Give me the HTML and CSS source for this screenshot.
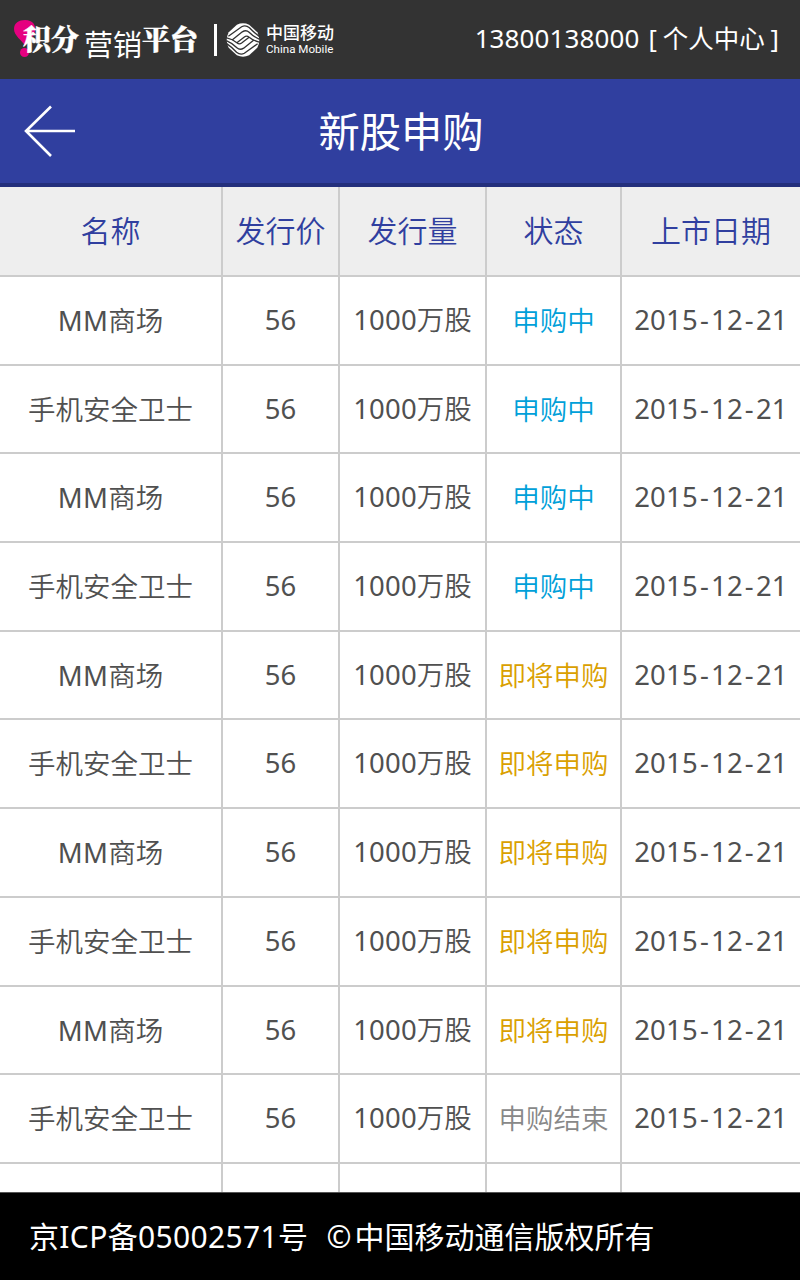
FILE: index.html
```html
<!DOCTYPE html>
<html lang="zh-CN">
<head>
<meta charset="utf-8">
<title>新股申购</title>
<link rel="stylesheet" href="styles.css">
</head>
<body>
<header class="topbar">
  <div class="brand">
    <svg class="mark" viewBox="0 0 24 40"><path d="M1 11C1 5 6 2 12 2C20 2 23 7 22 13C21 20 15 22 12 28C9 22 1 18 1 11Z"/><circle cx="11.5" cy="34.5" r="4.5"/></svg>
    <span class="serif first">积分</span><span class="sans">营销</span><span class="serif last">平台</span>
  </div>
  <i class="divider"></i>
  <svg class="cmcc" viewBox="0 0 100 100">
    <path class="disc" d="M32 5Q50 -3 68 5L92 27Q104 50 92 73L68 95Q50 103 32 95L8 73Q-4 50 8 27Z"/>
    <path d="M7 39L46 11Q58 5 69 14Q84 30 99 40M18 50L48 26Q59 19 68 27Q82 41 99 48M32 58L54 41Q61 36 68 42Q80 52 98 56"/>
    <path transform="rotate(180 50 50)" d="M7 39L46 11Q58 5 69 14Q84 30 99 40M18 50L48 26Q59 19 68 27Q82 41 99 48M32 58L54 41Q61 36 68 42Q80 52 98 56"/>
  </svg>
  <div class="cm"><span class="cm-zh">中国移动</span><span class="cm-en">China Mobile</span></div>
  <div class="user"><span class="phone">13800138000</span><span class="center">[ 个人中心 ]</span></div>
</header>
<div class="titlebar">
  <svg class="back" viewBox="0 0 52 52"><path d="M27 1.5L2 26L27 51M2 26H51"/></svg>
  <h1>新股申购</h1>
</div>
<main class="table">
  <div class="row head"><b>名称</b><b>发行价</b><b>发行量</b><b>状态</b><b>上市日期</b></div>
  <div class="row"><span><em>MM</em>商场</span><span class="num">56</span><span class="vol"><em>1000</em>万股</span><span class="open">申购中</span><span class="num date">2015<i>-</i>12<i>-</i>21</span></div>
  <div class="row"><span>手机安全卫士</span><span class="num">56</span><span class="vol"><em>1000</em>万股</span><span class="open">申购中</span><span class="num date">2015<i>-</i>12<i>-</i>21</span></div>
  <div class="row"><span><em>MM</em>商场</span><span class="num">56</span><span class="vol"><em>1000</em>万股</span><span class="open">申购中</span><span class="num date">2015<i>-</i>12<i>-</i>21</span></div>
  <div class="row"><span>手机安全卫士</span><span class="num">56</span><span class="vol"><em>1000</em>万股</span><span class="open">申购中</span><span class="num date">2015<i>-</i>12<i>-</i>21</span></div>
  <div class="row"><span><em>MM</em>商场</span><span class="num">56</span><span class="vol"><em>1000</em>万股</span><span class="soon">即将申购</span><span class="num date">2015<i>-</i>12<i>-</i>21</span></div>
  <div class="row"><span>手机安全卫士</span><span class="num">56</span><span class="vol"><em>1000</em>万股</span><span class="soon">即将申购</span><span class="num date">2015<i>-</i>12<i>-</i>21</span></div>
  <div class="row"><span><em>MM</em>商场</span><span class="num">56</span><span class="vol"><em>1000</em>万股</span><span class="soon">即将申购</span><span class="num date">2015<i>-</i>12<i>-</i>21</span></div>
  <div class="row"><span>手机安全卫士</span><span class="num">56</span><span class="vol"><em>1000</em>万股</span><span class="soon">即将申购</span><span class="num date">2015<i>-</i>12<i>-</i>21</span></div>
  <div class="row"><span><em>MM</em>商场</span><span class="num">56</span><span class="vol"><em>1000</em>万股</span><span class="soon">即将申购</span><span class="num date">2015<i>-</i>12<i>-</i>21</span></div>
  <div class="row"><span>手机安全卫士</span><span class="num">56</span><span class="vol"><em>1000</em>万股</span><span class="done">申购结束</span><span class="num date">2015<i>-</i>12<i>-</i>21</span></div>
  <div class="row"><span></span><span></span><span></span><span></span><span></span></div>
</main>
<footer class="footer"><span class="icp">京ICP备05002571号</span><span class="copy"><i>©</i>中国移动通信版权所有</span></footer>
</body>
</html>
```
FILE: styles.css
```css
* { box-sizing: border-box; }
body {
  margin: 0;
  width: 800px;
  height: 1280px;
  overflow: hidden;
  display: flex;
  flex-direction: column;
  background: #fff;
  color: #505050;
  font-family: "Noto Sans", "Noto Sans CJK SC", sans-serif;
}
i, em { font-style: normal; }
svg { display: block; flex: none; }
.topbar {
  height: 79px;
  flex: none;
  display: flex;
  align-items: flex-start;
  background: #333;
  color: #fff;
  white-space: nowrap;
}
.brand { display: flex; width: 214px; padding: 18px 0 0 13px; }
.mark { width: 24px; height: 40px; fill: #e5007f; }
.brand span { line-height: 40px; }
.serif { font-family: "Noto Serif CJK SC", "Noto Sans CJK SC", serif; font-weight: 900; font-size: 28px; -webkit-text-stroke: .4px #fff; }
.first { margin-left: -14px; }
.sans { font-size: 29px; font-family: "Noto Sans CJK SC", sans-serif; padding-top: 5px; margin-left: 5px; }
.last { margin-left: 0; }
.divider { width: 3px; height: 32px; margin-top: 24px; background: #fff; }
.cmcc { width: 34px; height: 34px; margin: 23px 0 0 9px; fill: none; stroke: #333; stroke-width: 4; }
.disc { fill: #fff; stroke: none; }
.cm { margin: 22px 0 0 6px; display: flex; flex-direction: column; }
.cm-zh { font: 500 17px/20px "Noto Sans CJK SC", sans-serif; }
.cm-en { font: 400 11.6px/14px Roboto, sans-serif; }
.user { margin-left: auto; padding-right: 21px; font-size: 26px; line-height: 40px; padding-top: 18px; display: flex; gap: 9px; }
.phone { letter-spacing: .12px; }
.center { font-size: 25.5px; word-spacing: -.8px; }
.titlebar {
  height: 108px;
  flex: none;
  background: #303f9f;
  border-bottom: 4px solid #232f7c;
  color: #fff;
  display: grid;
  grid-template-columns: 100px 1fr 100px;
}
.back { width: 52px; height: 52px; margin: 26px 0 0 24px; fill: none; stroke: #fff; stroke-width: 2.6; }
h1 { margin: 0; padding-left: 2px; font-size: 41.3px; line-height: 105px; font-weight: 400; text-align: center; }
.table { flex: 1; min-height: 0; overflow: hidden; }
.row {
  display: grid;
  grid-template-columns: 223px 117px 147px 135px 178px;
  height: 88.7px;
  font-size: 27.5px;
  line-height: 87px;
  text-align: center;
  white-space: nowrap;
  border-bottom: 2px solid #ccc;
}
.row > * { border-right: 2px solid #ccc; font-weight: 350; }
.row > :last-child { border-right: 0; }
.row > .vol { line-height: 85px; }
.row em { font-weight: 400; letter-spacing: .2px; }
.row > .num { font-weight: 400; line-height: 86px; }
.head { height: 90px; background: #eee; color: #303f9f; font-size: 30px; line-height: 88px; }
.date i { padding: 0 2px; }
.date { letter-spacing: .2px; }
.open { color: #00a0d9; }
.soon { color: #daa000; }
.done { color: #888; }
.footer {
  height: 88px;
  flex: none;
  background: #000;
  border-top: 1px solid #555;
  color: #fff;
  font-size: 30px;
  line-height: 87px;
  padding-left: 29px;
  display: flex;
  gap: 18px;
  white-space: nowrap;
}
.icp { letter-spacing: .35px; }
.copy i { margin-right: 3px; }
```
